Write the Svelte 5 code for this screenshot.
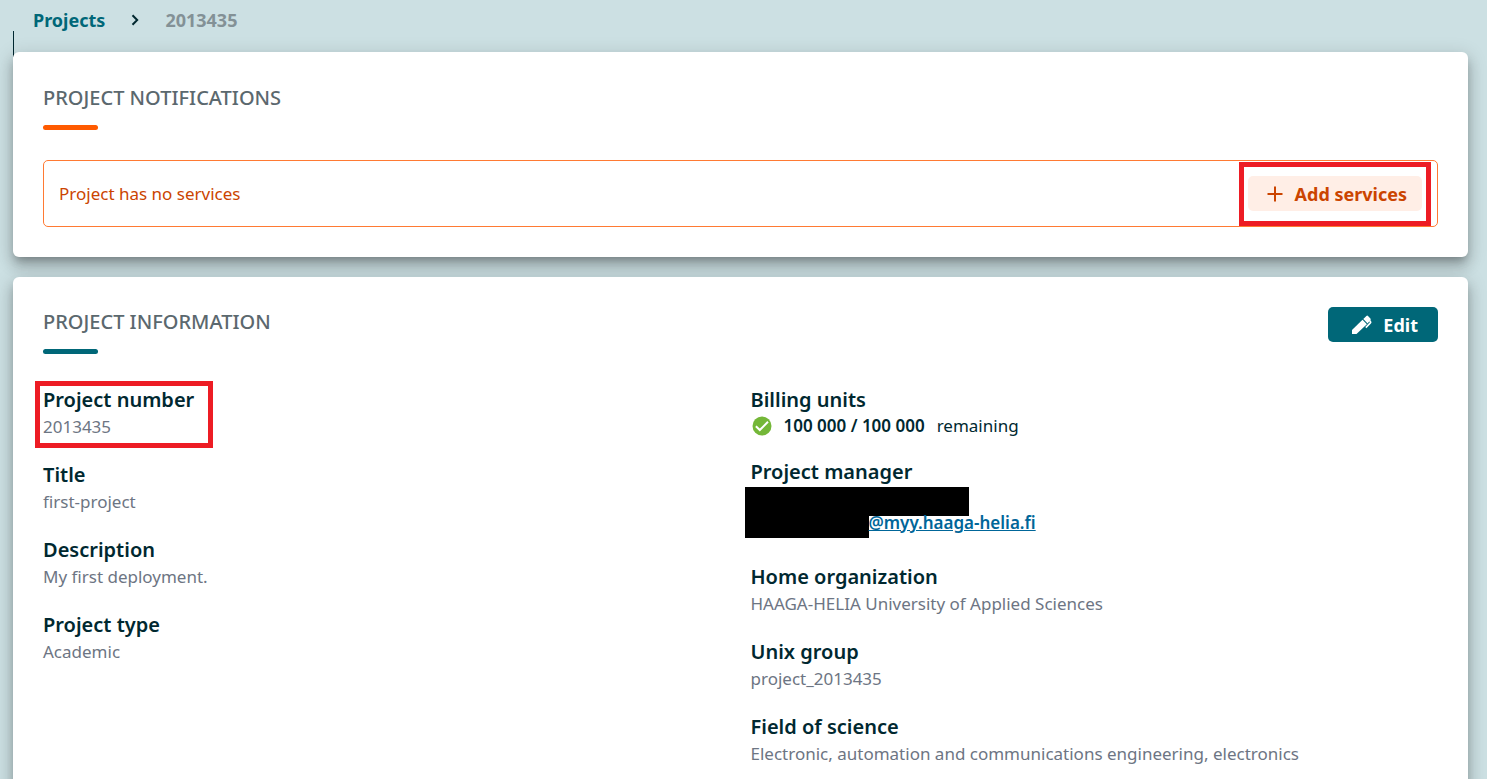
<script>
  const details = [
    { label: 'Project number', value: '2013435', marked: true },
    { label: 'Title', value: 'first-project' },
    { label: 'Description', value: 'My first deployment.' },
    { label: 'Project type', value: 'Academic' }
  ];
  const affiliation = [
    { label: 'Home organization', value: 'HAAGA-HELIA University of Applied Sciences' },
    { label: 'Unix group', value: 'project_2013435' },
    { label: 'Field of science', value: 'Electronic, automation and communications engineering, electronics' }
  ];
</script>

<div class="page">
  <nav class="crumbs" aria-label="Breadcrumb">
    <a href="#projects">Projects</a>
    <svg class="chevron" viewBox="0 0 8 12" aria-hidden="true"><path d="M1.500 1.200 6.200 6l-4.700 4.800" fill="none" stroke="currentColor" stroke-width="2" /></svg>
    <span>2013435</span>
  </nav>

  <main>
    <section class="card notifications">
      <h2>PROJECT NOTIFICATIONS</h2>
      <div class="bar orange"></div>
      <div class="notice">
        <p>Project has no services</p>
        <div class="marked action">
          <button class="add" type="button">
            <svg viewBox="0 0 16 16" width="16" height="16" aria-hidden="true"><path d="M8 .5v15M.5 8h15" fill="none" stroke="currentColor" stroke-width="2" /></svg>
            Add services
          </button>
        </div>
      </div>
    </section>

    <section class="card info">
      <header>
        <div>
          <h2>PROJECT INFORMATION</h2>
          <div class="bar"></div>
        </div>
        <button class="edit" type="button">
          <svg viewBox="0 0 20 20" width="20" height="20" aria-hidden="true">
            <path d="M0 15 10.500 4.700l4.400 4.500L4.500 19H0z" fill="currentColor" />
            <path d="M11.300 4 14.400.9q.8-.7 1.600 0l2.400 2.500q.8.800 0 1.600L15.600 8.400z" fill="currentColor" />
            <path d="m17.400 5.200 1.200 1.700q.3.500-.2 1l-4.600 4.700" fill="none" stroke="currentColor" stroke-width="1.600" />
          </svg>
          Edit
        </button>
      </header>

      <div class="columns">
        <dl>
          {#each details as item}
            <div class="field" class:marked={item.marked}>
              <dt>{item.label}</dt>
              <dd>{item.value}</dd>
            </div>
          {/each}
        </dl>
        <dl>
          <div class="field">
            <dt>Billing units</dt>
            <dd class="billing">
              <svg viewBox="0 0 20 20" width="20" height="20" aria-hidden="true">
                <circle cx="10" cy="10" r="9.500" fill="#74b738" />
                <path d="m3.900 10.200 3.900 3.800 8.200-8.200" fill="none" stroke="#fff" stroke-width="2" />
              </svg>
              <strong>100 000 / 100 000</strong>
              <span>remaining</span>
            </dd>
          </div>
          <div class="field">
            <dt>Project manager</dt>
            <dd class="manager">
              <div class="hidden-name"></div>
              <div class="mail">
                <div class="hidden-mail"></div>
                <a href="#mail">@myy.haaga-helia.fi</a>
              </div>
            </dd>
          </div>
          {#each affiliation as item}
            <div class="field">
              <dt>{item.label}</dt>
              <dd>{item.value}</dd>
            </div>
          {/each}
        </dl>
      </div>
    </section>
  </main>
</div>

<style>
  :global(html) {
    background: #cce0e3;
  }
  :global(body) {
    background: #cce0e3;
    overflow: hidden;
  }
  .page {
    box-sizing: border-box;
    height: 100vh;
    overflow: hidden;
    color: #002830;
    font-family: 'Noto Sans', sans-serif;
    font-size: 17px;
    line-height: 28px;
  }
  h2, p, dl, dd {
    margin: 0;
  }
  .crumbs {
    display: flex;
    align-items: center;
    height: 40px;
    padding-left: 33px;
    font-size: 18px;
    font-weight: 700;
  }
  .crumbs a {
    color: #006778;
    text-decoration: none;
  }
  .crumbs span {
    color: #839196;
  }
  .chevron {
    width: 8px;
    height: 12px;
    margin: 0 26px;
  }
  main {
    position: relative;
    display: flex;
    flex-direction: column;
    gap: 20px;
    padding: 12px 19px 0 13px;
  }
  main::before {
    content: '';
    position: absolute;
    left: 13px;
    top: -9px;
    width: 1px;
    height: 26px;
    background: #002830;
  }
  .card {
    position: relative;
    padding: 30px;
    border-radius: 6px;
    background: #fff;
    box-shadow:
      0 6px 8px -3px rgba(0, 0, 0, 0.26),
      0 10px 14px 1px rgba(0, 0, 0, 0.14),
      0 4px 18px 3px rgba(0, 0, 0, 0.12);
  }
  .notifications {
    padding-top: 31px;
  }
  .info {
    min-height: 520px;
  }
  h2 {
    color: #5b686e;
    font-size: 20px;
    font-weight: 500;
    line-height: 30px;
  }
  .bar {
    width: 55px;
    height: 5px;
    margin-top: 12px;
    border-radius: 3px;
    background: #006778;
  }
  .bar.orange {
    background: #ff5a00;
  }
  .notice {
    display: flex;
    align-items: center;
    justify-content: space-between;
    margin-top: 30px;
    padding: 15px;
    border: 1px solid #ff7a33;
    border-radius: 5px;
    color: #cb4400;
  }
  .marked {
    position: relative;
  }
  .marked::after {
    content: '';
    position: absolute;
    inset: -5px -19px -8px -8px;
    border: 5px solid #ed1c24;
    pointer-events: none;
  }
  .action::after {
    inset: -14px -9px -15px;
  }
  button {
    display: flex;
    align-items: center;
    justify-content: space-between;
    height: 35px;
    padding: 0 15px 0 19px;
    border: 0;
    border-radius: 5px;
    font: inherit;
    font-size: 18px;
    font-weight: 700;
    cursor: pointer;
  }
  .add {
    width: 174px;
    background: #ffeee6;
    color: #cb4400;
  }
  .edit {
    width: 110px;
    padding: 0 20px 0 24px;
    background: #006778;
    color: #fff;
  }
  header {
    display: flex;
    align-items: flex-start;
    justify-content: space-between;
  }
  .columns {
    display: grid;
    grid-template-columns: 1fr 1fr;
    gap: 20px;
    margin-top: 32px;
  }
  dl {
    display: flex;
    flex-direction: column;
    gap: 21px;
  }
  .field.marked {
    width: fit-content;
  }
  dt {
    font-size: 20px;
    font-weight: 600;
  }
  dd {
    color: #6d7583;
    line-height: 26px;
  }
  .billing {
    display: flex;
    align-items: center;
    height: 23px;
    padding-left: 1px;
    color: #002830;
  }
  .billing strong {
    margin: 0 12px;
    font-weight: 600;
  }
  .manager {
    height: 56px;
    padding-top: 1px;
    box-sizing: border-box;
    margin-left: -6px;
  }
  .hidden-name {
    width: 224px;
    height: 29px;
    background: #000;
  }
  .mail {
    display: flex;
    line-height: 14px;
  }
  .hidden-mail {
    width: 124px;
    height: 22px;
    background: #000;
  }
  .mail a {
    color: #006699;
    font-weight: 600;
  }
</style>
